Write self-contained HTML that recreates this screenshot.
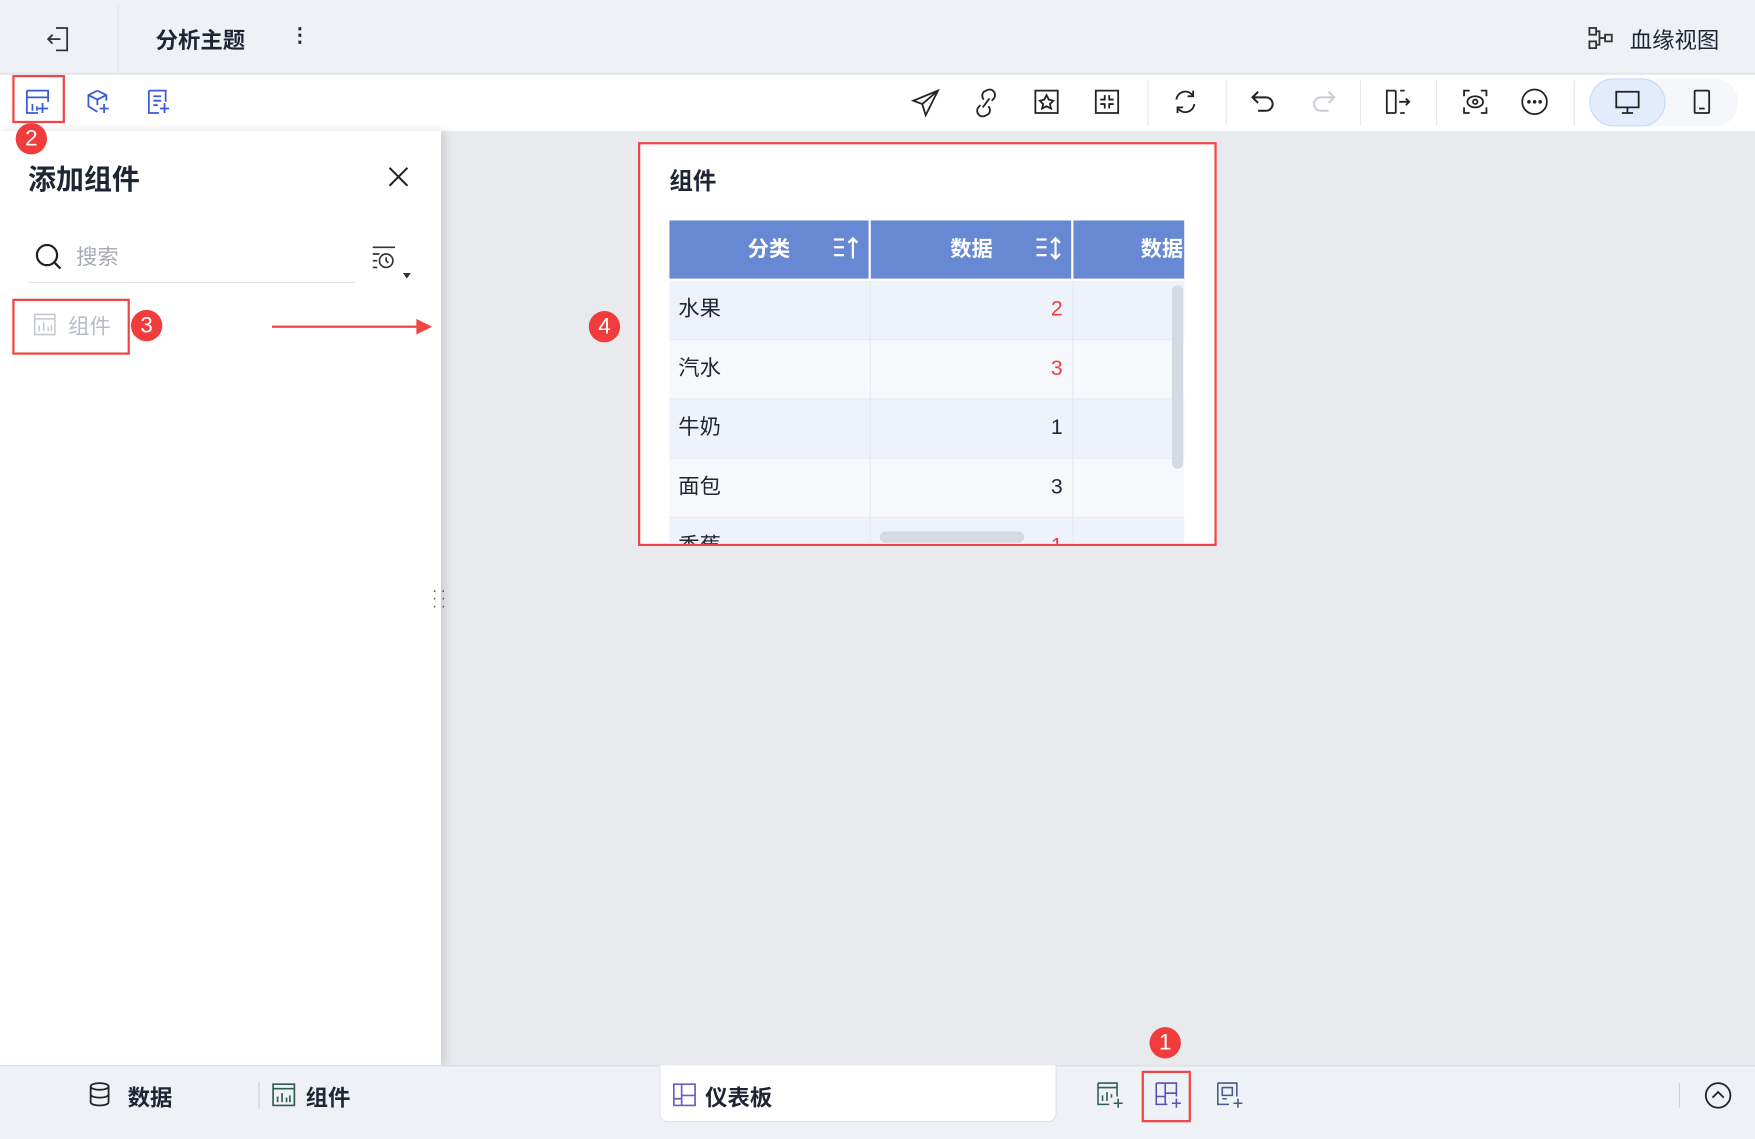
<!DOCTYPE html>
<html><head><meta charset="utf-8"><style>
*{box-sizing:border-box;margin:0;padding:0}
html,body{width:1755px;height:1139px;overflow:hidden;background:#e8eaee}
#w{position:absolute;left:0;top:0;width:1568px;height:1018px;transform:scale(1.1193,1.1189);transform-origin:0 0;font-family:"Liberation Sans","Noto Sans CJK SC",sans-serif;color:#1f2533;background:#e8eaee}
.a{position:absolute}
.t{position:absolute;white-space:nowrap}
svg{position:absolute;overflow:visible}
.badge{position:absolute;width:28px;height:28px;border-radius:50%;background:#f03c3c;color:#fff;font-size:20px;text-align:center;line-height:28px;z-index:5}
.red{position:absolute;border:2px solid #f04545}
.sep{position:absolute;width:1px;background:#e3e6eb}
td{border-right:1px solid #e6e9f0;border-bottom:1px solid #e6e9f0;height:53px;font-size:19px;padding:0 8px;line-height:1}
</style></head><body><div id="w">
<div class="a" style="left:0;top:0;width:1568px;height:66px;background:#eef1f6;border-bottom:1px solid #e1e4ea"></div>
<svg style="left:42px;top:24px" width="22" height="22" fill="none" stroke="#333" stroke-width="1.6"><path d="M8 1h10v20H8M1 11h11M5 7l-4 4 4 4"/></svg>
<div class="sep" style="left:105px;top:4px;height:62px"></div>
<div class="t" style="left:139px;top:20px;font-size:20px;font-weight:bold">分析主题</div>
<div class="t" style="left:259px;top:22px;font-size:18px;font-weight:bold;line-height:1">⋮</div>
<svg style="left:1419px;top:24px" width="22" height="20" fill="none" stroke="#333" stroke-width="1.6"><rect x="1" y="1" width="6" height="6"/><rect x="1" y="13" width="6" height="6"/><rect x="15" y="7" width="6" height="6"/><path d="M7 4h3v12H7M10 10h5"/></svg>
<div class="t" style="left:1456px;top:20px;font-size:20px">血缘视图</div>
<div class="a" style="left:0;top:67px;width:1568px;height:50px;background:#fff"></div>
<svg style="left:23px;top:80px" width="21" height="22" fill="none" stroke="#3a5bd6" stroke-width="1.6"><path d="M1 1h19v10M1 1v20h10M1 7h19M6 13v6M10 15v4M15 12v9M11 17h9"/></svg>
<svg style="left:77px;top:80px" width="22" height="22" fill="none" stroke="#3a5bd6" stroke-width="1.6"><path d="M10 1l8 4v5M10 1L2 5v10l8 5M2 5l8 4 8-4M10 9v5M16 13v8M12 17h8"/></svg>
<svg style="left:132px;top:80px" width="20" height="22" fill="none" stroke="#3a5bd6" stroke-width="1.6"><path d="M1 1h15v10M1 1v20h9M5 6h7M5 10h7M5 14h4M15 12v9M11 17h8"/></svg>
<div class="red" style="left:11px;top:67px;width:47px;height:43px"></div>
<svg style="left:815px;top:80px" width="24" height="24" fill="none" stroke="#222" stroke-width="1.6"><path d="M23 1L1 10l8 3 3 10zM9 13L23 1"/></svg>
<svg style="left:870px;top:80px" width="22" height="24" fill="none" stroke="#222" stroke-width="1.6"><path d="M9 9a5 5 0 0 1 0-7l2-1a5 5 0 0 1 7 7l-2 2M13 15a5 5 0 0 1 0 7l-2 1a5 5 0 0 1-7-7l2-2M8 16l6-8"/></svg>
<svg style="left:924px;top:80px" width="22" height="22" fill="none" stroke="#222" stroke-width="1.6"><path d="M1 1h20v20H1zM11 5l2 4 4 1-3 3 1 4-4-2-4 2 1-4-3-3 4-1z"/></svg>
<svg style="left:978px;top:80px" width="22" height="22" fill="none" stroke="#222" stroke-width="1.6"><path d="M1 1h20v20H1zM9 5v4H5M13 5v4h4M9 17v-4H5M13 17v-4h4"/></svg>
<div class="sep" style="left:1025px;top:72px;height:40px"></div>
<svg style="left:1048px;top:80px" width="22" height="22" fill="none" stroke="#222" stroke-width="1.6"><path d="M3 9a8 8 0 0 1 15-3M19 13a8 8 0 0 1-15 3M18 1v5h-5M4 21v-5h5"/></svg>
<div class="sep" style="left:1095px;top:72px;height:40px"></div>
<svg style="left:1118px;top:81px" width="22" height="20" fill="none" stroke="#222" stroke-width="1.8"><path d="M6 1L1 6l5 5M1 6h12a6 6 0 0 1 0 12H6"/></svg>
<svg style="left:1171px;top:81px" width="22" height="20" fill="none" stroke="#c9ccd3" stroke-width="1.8"><path d="M16 1l5 5-5 5M21 6H9a6 6 0 0 0 0 12h7"/></svg>
<div class="sep" style="left:1215px;top:72px;height:40px"></div>
<svg style="left:1238px;top:80px" width="22" height="22" fill="none" stroke="#222" stroke-width="1.6"><path d="M9 1H1v20h8M9 1v20M13 1h4M13 21h4M12 11h9M18 8l3 3-3 3"/></svg>
<div class="sep" style="left:1283px;top:72px;height:40px"></div>
<svg style="left:1307px;top:80px" width="22" height="22" fill="none" stroke="#222" stroke-width="1.6"><path d="M1 6V1h5M16 1h5v5M21 16v5h-5M6 21H1v-5"/><ellipse cx="11" cy="11" rx="7" ry="5"/><circle cx="11" cy="11" r="2"/></svg>
<svg style="left:1359px;top:79px" width="24" height="24" fill="none" stroke="#222" stroke-width="1.6"><circle cx="12" cy="12" r="11"/><circle cx="7" cy="12" r=".8" fill="#222"/><circle cx="12" cy="12" r=".8" fill="#222"/><circle cx="17" cy="12" r=".8" fill="#222"/></svg>
<div class="sep" style="left:1406px;top:72px;height:40px"></div>
<div class="a" style="left:1420px;top:70px;width:133px;height:43px;border-radius:22px;background:#f5f7fb"></div>
<div class="a" style="left:1420px;top:70px;width:68px;height:43px;border-radius:22px;background:#e2ecfd;border:1px solid #c7d8f7"></div>
<svg style="left:1443px;top:81px" width="22" height="21" fill="none" stroke="#222" stroke-width="1.6"><path d="M1 1h20v14H1zM11 15v5M6 20h10"/></svg>
<svg style="left:1513px;top:80px" width="15" height="22" fill="none" stroke="#222" stroke-width="1.6"><rect x="1" y="1" width="13" height="20" rx="1"/><path d="M5 17h5"/></svg>
<div class="a" style="left:0;top:117px;width:394px;height:836px;background:#fff;box-shadow:4px 0 8px rgba(0,0,0,.12)"></div>
<div class="badge" style="left:14px;top:110px">2</div>
<div class="t" style="left:25px;top:141px;font-size:25px;font-weight:bold">添加组件</div>
<svg style="left:347px;top:149px" width="18" height="18" fill="none" stroke="#222" stroke-width="1.8"><path d="M1 1l16 16M17 1L1 17"/></svg>
<svg style="left:32px;top:218px" width="24" height="24" fill="none" stroke="#222" stroke-width="2"><circle cx="10" cy="10" r="9"/><path d="M17 17l5 5"/></svg>
<div class="t" style="left:68px;top:215px;font-size:19px;color:#a6abb5">搜索</div>
<div class="a" style="left:25px;top:252px;width:292px;height:1px;background:#dfe2e8"></div>
<svg style="left:332px;top:219px" width="38" height="32" fill="none" stroke="#333" stroke-width="1.5"><path d="M1 2h20M1 8h6M1 14h4M1 20h4"/><circle cx="13" cy="14" r="6"/><path d="M13 11v3l2 2"/><path d="M28 25h7l-3.5 5z" fill="#333" stroke="none"/></svg>
<div class="red" style="left:11px;top:267px;width:105px;height:50px"></div>
<svg style="left:30px;top:280px" width="20" height="20" fill="none" stroke="#c4c8cf" stroke-width="1.4"><path d="M1 1h18v18H1zM1 5h18M5 16v-5M9 16v-8M13 16v-4M16 16v-6"/></svg>
<div class="t" style="left:61px;top:277px;font-size:19px;color:#b7bcc5">组件</div>
<div class="badge" style="left:117px;top:277px">3</div>
<div class="a" style="left:243px;top:291px;width:132px;height:2px;background:#f04545"></div>
<svg style="left:372px;top:285px" width="14" height="14"><path d="M0 0l14 7-14 7z" fill="#f04545"/></svg>
<div class="t" style="left:386px;top:524px;font-size:14px;line-height:7px;color:#555;letter-spacing:3px">··<br>··<br>··</div>
<div class="a" style="left:570px;top:127px;width:517px;height:361px;background:#fff;border:2.5px solid #f04545;overflow:hidden">
<div class="t" style="left:26px;top:17px;font-size:21px;font-weight:bold">组件</div>
<div class="a" style="left:26px;top:68px;width:460px;height:290px;overflow:hidden">
<table style="border-collapse:collapse;width:540px;table-layout:fixed">
<tr style="background:#6788d2;color:#fff;font-weight:bold"><td style="width:179px;height:49px;border-right:2px solid #fff;border-bottom:2px solid #fff;text-align:right;padding-right:70px">分类</td><td style="width:181px;height:49px;border-right:2px solid #fff;border-bottom:2px solid #fff;text-align:right;padding-right:70px">数据</td><td style="border-bottom:2px solid #fff;padding-left:60px">数据</td></tr>
<tr style="background:#eef2fa"><td>水果</td><td style="text-align:right;color:#f03c3c">2</td><td></td></tr>
<tr style="background:#f6f8fc"><td>汽水</td><td style="text-align:right;color:#f03c3c">3</td><td></td></tr>
<tr style="background:#eef2fa"><td>牛奶</td><td style="text-align:right">1</td><td></td></tr>
<tr style="background:#f6f8fc"><td>面包</td><td style="text-align:right">3</td><td></td></tr>
<tr style="background:#eef2fa"><td>香蕉</td><td style="text-align:right;color:#f03c3c">1</td><td></td></tr>
</table>
<svg style="left:146px;top:14px" width="24" height="22" fill="none" stroke="#fff" stroke-width="2"><path d="M1 3h9M1 10h9M1 17h9M18 20V2M14 6l4-4 4 4"/></svg>
<svg style="left:327px;top:14px" width="24" height="22" fill="none" stroke="#fff" stroke-width="2"><path d="M1 3h9M1 10h9M1 17h9M18 20V2M14 6l4-4 4 4M14 16l4 4 4-4"/></svg>
<div class="a" style="left:449px;top:58px;width:10px;height:164px;border-radius:5px;background:#d6dae2"></div>
<div class="a" style="left:188px;top:278px;width:129px;height:10px;border-radius:5px;background:#d6dae2"></div>
</div></div>
<div class="badge" style="left:526px;top:278px">4</div>
<div class="a" style="left:0;top:952px;width:1568px;height:66px;background:#eef1f6;border-top:1px solid #d5d9e2"></div>
<svg style="left:79px;top:967px" width="20" height="22" fill="none" stroke="#222" stroke-width="1.6"><ellipse cx="10" cy="4" rx="8" ry="3"/><path d="M2 4v14c0 4 16 4 16 0V4M2 11c0 4 16 4 16 0"/></svg>
<div class="t" style="left:114px;top:965px;font-size:20px;font-weight:bold">数据</div>
<div class="sep" style="left:231px;top:967px;height:24px;background:#ccd0d8"></div>
<svg style="left:243px;top:968px" width="21" height="21" fill="none" stroke="#2f5f4f" stroke-width="1.5"><path d="M1 1h19v19H1zM1 5h19M5 17v-5M9 17v-8M13 17v-4M16 17v-6"/></svg>
<div class="t" style="left:273px;top:965px;font-size:20px;font-weight:bold">组件</div>
<div class="a" style="left:589px;top:952px;width:355px;height:51px;background:#fff;border-radius:0 0 8px 8px;border:1px solid #dde0e6;border-top:none"></div>
<svg style="left:601px;top:968px" width="21" height="21" fill="none" stroke="#6a5fc0" stroke-width="1.5"><path d="M1 1h19v19H1zM8 1v19M8 11h12M1 14h7" /></svg>
<div class="t" style="left:630px;top:965px;font-size:20px;font-weight:bold">仪表板</div>
<svg style="left:980px;top:967px" width="24" height="24" fill="none" stroke="#2f5f4f" stroke-width="1.4"><path d="M1 1h17v12M1 1v19h10M1 5h17M5 17v-5M9 17v-8M13 14v-3M19 15v8M15 19h8"/></svg>
<svg style="left:1032px;top:967px" width="24" height="24" fill="none" stroke="#5a4fb8" stroke-width="1.4"><path d="M1 1h18v12M1 1v19h10M9 1v19M9 10h10M1 13h8M19 15v8M15 19h8"/></svg>
<div class="red" style="left:1020px;top:957px;width:44px;height:46px"></div>
<div class="badge" style="left:1027px;top:918px">1</div>
<svg style="left:1087px;top:967px" width="24" height="24" fill="none" stroke="#4a5a8a" stroke-width="1.4"><path d="M1 1h17v12M1 1v19h10M5 5h9v7H5zM5 15h4M19 15v8M15 19h8"/></svg>
<div class="sep" style="left:1500px;top:968px;height:22px;background:#ccd0d8"></div>
<svg style="left:1523px;top:967px" width="24" height="24" fill="none" stroke="#222" stroke-width="1.6"><circle cx="12" cy="12" r="11"/><path d="M7 14l5-5 5 5"/></svg>
</div></body></html>
